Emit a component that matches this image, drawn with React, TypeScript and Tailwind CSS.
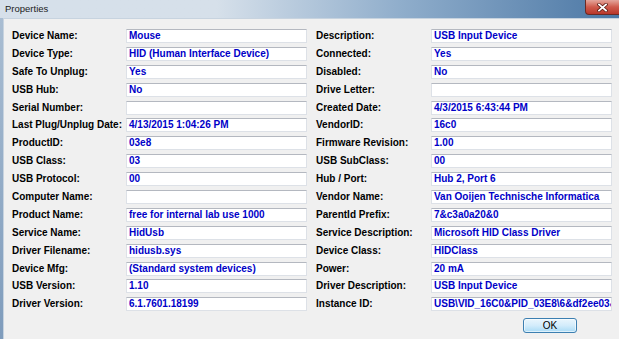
import React from 'react';

const leftRows: [string, string][] = [
  ['Device Name:', 'Mouse'],
  ['Device Type:', 'HID (Human Interface Device)'],
  ['Safe To Unplug:', 'Yes'],
  ['USB Hub:', 'No'],
  ['Serial Number:', ''],
  ['Last Plug/Unplug Date:', '4/13/2015 1:04:26 PM'],
  ['ProductID:', '03e8'],
  ['USB Class:', '03'],
  ['USB Protocol:', '00'],
  ['Computer Name:', ''],
  ['Product Name:', 'free for internal lab use 1000'],
  ['Service Name:', 'HidUsb'],
  ['Driver Filename:', 'hidusb.sys'],
  ['Device Mfg:', '(Standard system devices)'],
  ['USB Version:', '1.10'],
  ['Driver Version:', '6.1.7601.18199'],
];

const rightRows: [string, string][] = [
  ['Description:', 'USB Input Device'],
  ['Connected:', 'Yes'],
  ['Disabled:', 'No'],
  ['Drive Letter:', ''],
  ['Created Date:', '4/3/2015 6:43:44 PM'],
  ['VendorID:', '16c0'],
  ['Firmware Revision:', '1.00'],
  ['USB SubClass:', '00'],
  ['Hub / Port:', 'Hub 2, Port 6'],
  ['Vendor Name:', 'Van Ooijen Technische Informatica'],
  ['ParentId Prefix:', '7&c3a0a20&0'],
  ['Service Description:', 'Microsoft HID Class Driver'],
  ['Device Class:', 'HIDClass'],
  ['Power:', '20 mA'],
  ['Driver Description:', 'USB Input Device'],
  ['Instance ID:', 'USB\\VID_16C0&PID_03E8\\6&df2ee03&0&2'],
];

const Field = ({ label, value, labelWidth }: { label: string; value: string; labelWidth: string }) => (
  <div className="flex items-center h-[14px]">
    <div className={`${labelWidth} shrink-0 text-[10px] font-bold text-black leading-none`}>{label}</div>
    <div className="w-[181px] h-[14px] shrink-0 flex items-center overflow-hidden whitespace-nowrap bg-white border border-[#dde1e7] border-t-[#b4b8c0] pl-[2px] text-[10px] font-bold text-[#0000c8] leading-none">
      {value}
    </div>
  </div>
);

const App = () => {
  return (
    <div
      className="w-[619px] h-[339px] overflow-hidden flex flex-col bg-linear-to-r from-[#d6e0ea] from-35% via-[#8fadcb] via-65% to-[#4c78a5]"
      style={{ fontFamily: '"Liberation Sans", Arial, sans-serif' }}
    >
      {/* Title bar */}
      <div className="h-[18px] shrink-0 flex items-start justify-between">
        <span className="pl-[5px] pt-[4px] text-[9.5px] leading-none text-[#222]">Properties</span>
        <div className="w-[34px] h-[15px] rounded-bl-[4px] border border-r-0 border-t-0 border-[#6b2a24] bg-linear-to-b from-[#e3a59c] via-[#cf5a4c] to-[#b8362a] flex items-center justify-center">
          <svg width="11" height="9" viewBox="0 0 11 9">
            <path d="M2 1.5 L9 7.5 M9 1.5 L2 7.5" stroke="#5a1a14" strokeWidth="3.4" strokeLinecap="square" />
            <path d="M2 1.5 L9 7.5 M9 1.5 L2 7.5" stroke="#ffffff" strokeWidth="1.8" strokeLinecap="square" />
          </svg>
        </div>
      </div>

      <div className="flex-1 flex">
        {/* Left window frame */}
        <div className="w-[3px] shrink-0 bg-linear-to-b from-[#a9bdd2] to-[#7f9cbc]" />

        {/* Client area */}
        <div className="flex-1 bg-[#f0f0f0] border-t border-l border-[#c7d3df] pl-[8px] pt-[10px] flex items-start gap-[9px]">
          <div className="flex flex-col gap-y-[3.9px]">
            {leftRows.map(([label, value], i) => (
              <Field key={i} label={label} value={value} labelWidth="w-[114px]" />
            ))}
          </div>
          <div className="flex flex-col">
            <div className="flex flex-col gap-y-[3.9px]">
              {rightRows.map(([label, value], i) => (
                <Field key={i} label={label} value={value} labelWidth="w-[115px]" />
              ))}
            </div>
            <button className="ml-[207px] mt-[7px] w-[54px] h-[15px] rounded-[3px] border border-[#3c7fb1] bg-linear-to-b from-[#eaf6fd] via-[#d3ecfb] to-[#a9dbf6] shadow-[inset_0_0_0_1px_#ffffff99] text-[10px] leading-none text-black flex items-center justify-center">
              OK
            </button>
          </div>
        </div>
      </div>
    </div>
  );
};

export default App;
